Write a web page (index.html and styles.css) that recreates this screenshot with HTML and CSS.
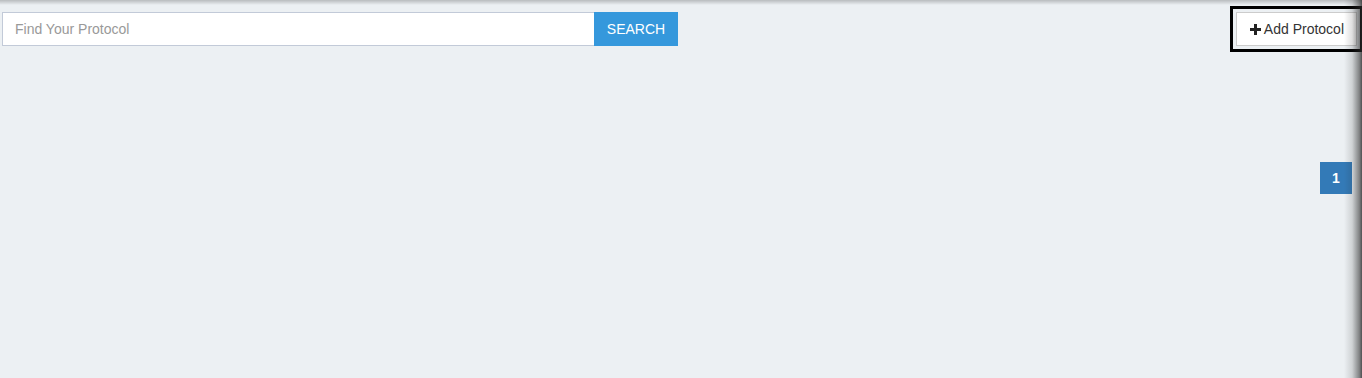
FILE: index.html
```html
<!DOCTYPE html>
<html>
<head>
<meta charset="utf-8">
<link rel="stylesheet" href="styles.css">
</head>
<body>
<div class="page">
  <div class="toolbar">
    <form class="search">
      <input class="search-input" type="text" placeholder="Find Your Protocol">
      <button class="search-btn" type="button">SEARCH</button>
    </form>
    <button class="add-btn" type="button"><svg class="plus" width="11" height="11" viewBox="0 0 11 11"><path d="M4 0h3v4h4v3H7v4H4V7H0V4h4z" fill="#222"/></svg>Add Protocol</button>
  </div>
  <div class="pager">
    <span class="page-num">1</span>
  </div>
</div>
</body>
</html>
```
FILE: styles.css
```css
html, body {
  margin: 0;
  padding: 0;
  height: 100%;
}
body {
  background: #ecf0f3;
  font-family: "Liberation Sans", Arial, sans-serif;
  font-size: 14px;
  color: #333;
  overflow: hidden;
}
.page {
  position: relative;
  height: 378px;
  box-sizing: border-box;
  padding: 12px 5px 0 2px;
}
.page::before {
  content: "";
  position: absolute;
  left: 0;
  right: 0;
  top: 0;
  height: 5px;
  background: linear-gradient(to bottom, rgba(0,0,0,0.22), rgba(0,0,0,0));
  pointer-events: none;
}
.page::after {
  content: "";
  position: absolute;
  top: 0;
  right: 0;
  bottom: 0;
  width: 18px;
  background: linear-gradient(to right, rgba(40,40,40,0), rgba(40,40,40,0.15) 45%, rgba(40,40,40,0.55) 85%, rgba(40,40,40,0.8));
  pointer-events: none;
}
.toolbar {
  display: flex;
  justify-content: space-between;
  align-items: flex-start;
}
.search {
  display: flex;
  margin: 0;
}
.search-input {
  width: 592px;
  height: 34px;
  box-sizing: border-box;
  border: 1px solid #c2cad8;
  border-right: none;
  background: #fff;
  padding: 0 12px;
  font-family: inherit;
  font-size: 14px;
  color: #555;
  outline: none;
}
.search-input::placeholder {
  color: #999;
}
.search-btn {
  width: 84px;
  height: 34px;
  border: none;
  background: #3598dc;
  color: #fff;
  font-family: inherit;
  font-size: 14px;
  padding: 0;
}
.add-btn {
  display: flex;
  align-items: center;
  gap: 3px;
  height: 34px;
  box-sizing: border-box;
  padding: 0 12px 0 13px;
  background: #fff;
  border: 1px solid #ccc;
  font-family: inherit;
  font-size: 14px;
  color: #333;
  outline: 3px solid #000;
  outline-offset: 3px;
}
.plus {
  display: block;
}
.pager {
  display: flex;
  justify-content: flex-end;
  margin-top: 116px;
  padding-right: 5px;
}
.page-num {
  width: 32px;
  height: 32px;
  display: flex;
  align-items: center;
  justify-content: center;
  background: #337ab7;
  color: #fff;
  font-weight: bold;
  font-size: 14px;
}
```
